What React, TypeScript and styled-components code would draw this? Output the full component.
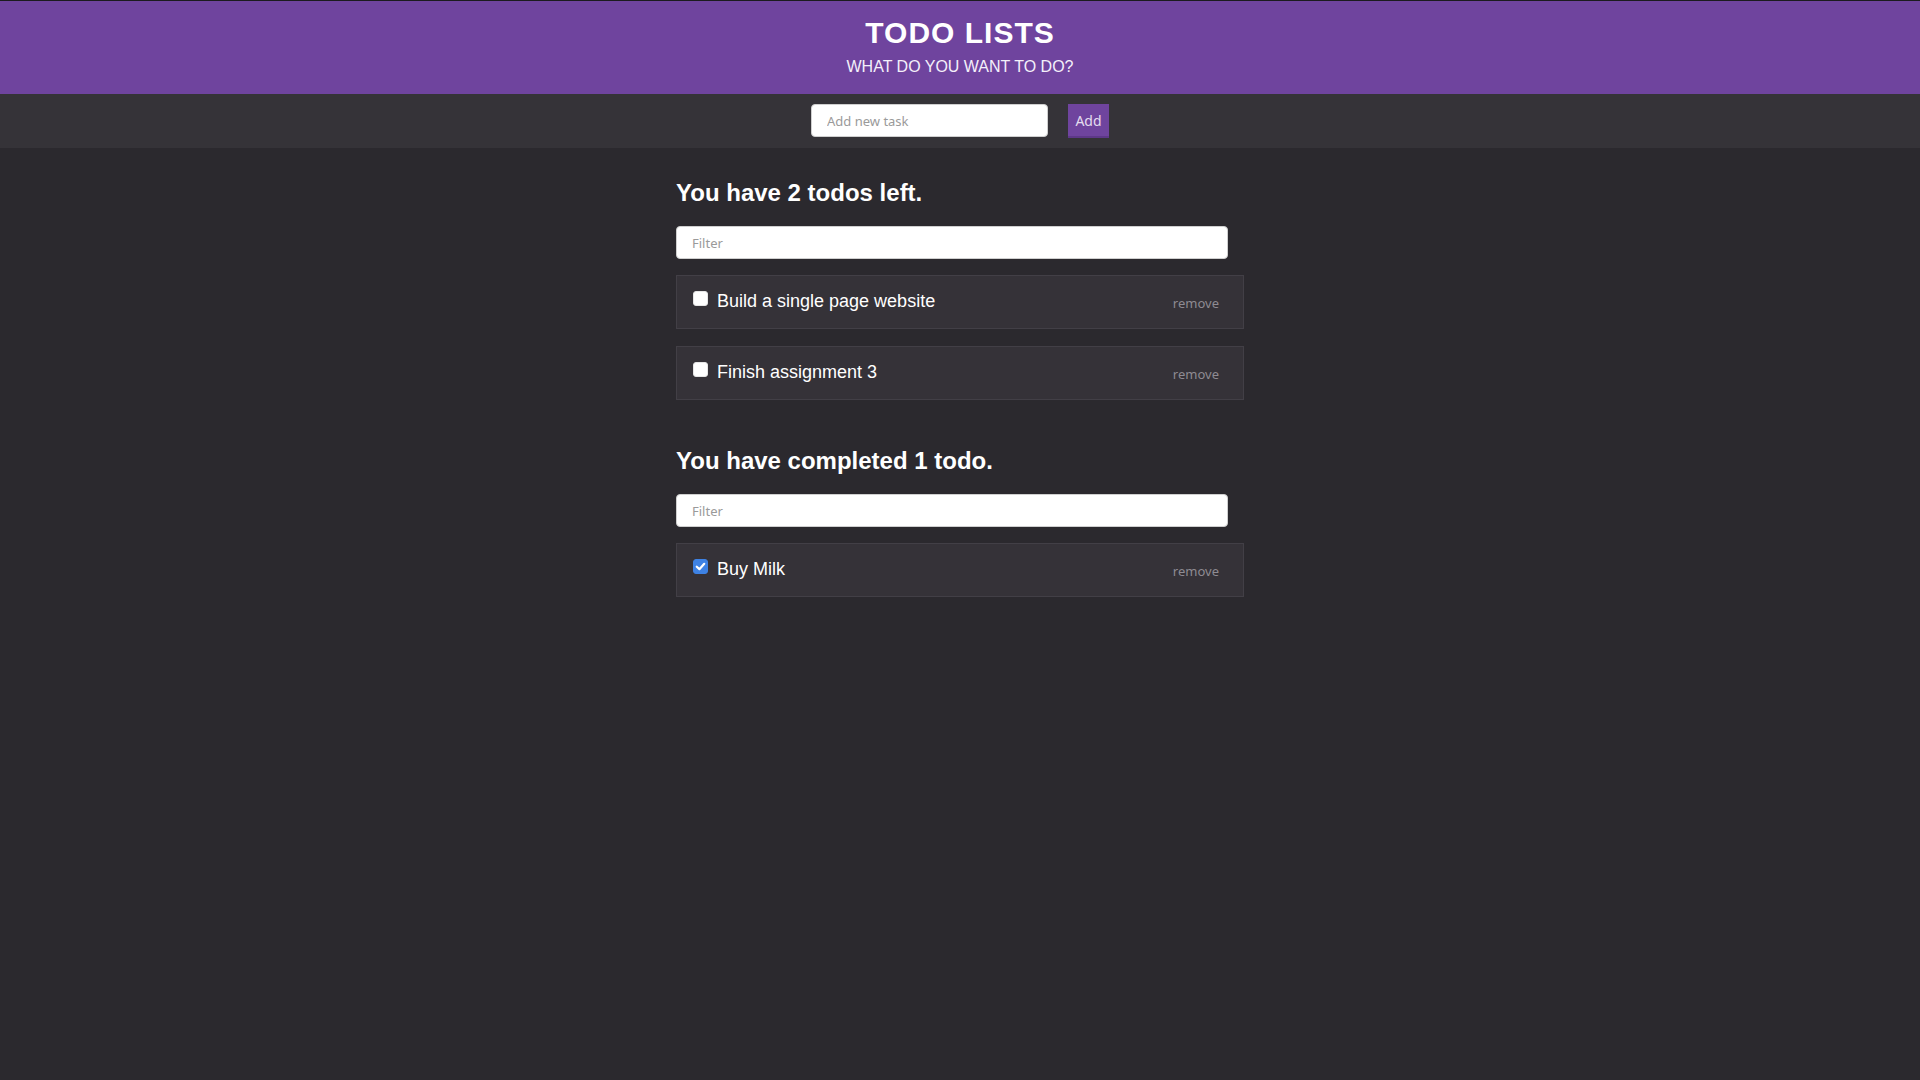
import React from "react";
import styled, { createGlobalStyle } from "styled-components";

const GlobalStyle = createGlobalStyle`
  html, body {
    margin: 0;
    padding: 0;
    background: #2b292e;
    min-height: 100%;
  }
  body {
    font-family: "Liberation Sans", Arial, sans-serif;
    color: #ffffff;
  }
  * { box-sizing: border-box; }
`;

const Page = styled.div`
  min-height: 1080px;
  background: #2b292e;
`;

const Header = styled.header`
  background: #6f449e;
  border-top: 1px solid #1c1b1f;
  height: 94px;
  padding-top: 15px;
  text-align: center;
`;

const Title = styled.h1`
  margin: 0;
  font-family: "Liberation Sans", Arial, sans-serif;
  font-size: 30px;
  line-height: 34px;
  font-weight: 700;
  letter-spacing: 1px;
  color: #ffffff;
`;

const Subtitle = styled.p`
  margin: 7px 0 0;
  font-family: "Liberation Sans", Arial, sans-serif;
  font-size: 16px;
  line-height: 20px;
  color: #f4f0fa;
`;

const Toolbar = styled.form`
  height: 54px;
  background: #353338;
  display: flex;
  justify-content: center;
  align-items: flex-start;
  padding-top: 10px;
  gap: 20px;
`;

const TextInput = styled.input<{ $width: number }>`
  width: ${(p) => p.$width}px;
  height: 33px;
  border: 1px solid #cfcfcf;
  border-radius: 4px;
  background: #ffffff;
  padding: 0 15px;
  font-family: "Noto Sans", "Open Sans", sans-serif;
  font-size: 13px;
  color: #333;
  outline: none;
  &::placeholder {
    color: #9a9a9a;
  }
`;

const AddButton = styled.button`
  width: 41px;
  height: 34px;
  border: none;
  border-bottom: 2px solid #5e3889;
  background: #6f449e;
  color: #e4dcef;
  font-family: "Noto Sans", "Open Sans", sans-serif;
  font-size: 14px;
  padding: 0;
  cursor: pointer;
`;

const Main = styled.main`
  width: 568px;
  margin: 0 auto;
  padding-top: 31px;
  display: flex;
  flex-direction: column;
  gap: 47px;
`;

const Section = styled.section`
  display: flex;
  flex-direction: column;
`;

const Heading = styled.h2`
  margin: 0 0 19px;
  font-family: "Liberation Sans", Arial, sans-serif;
  font-size: 24px;
  line-height: 28px;
  font-weight: 700;
  color: #ffffff;
`;

const List = styled.ul`
  list-style: none;
  margin: 16px 0 0;
  padding: 0;
  display: flex;
  flex-direction: column;
  gap: 17px;
`;

const Item = styled.li`
  height: 54px;
  background: #353238;
  border: 1px solid #423f46;
  padding: 15px 24px 0 16px;
  display: flex;
  align-items: flex-start;
`;

const CheckBox = styled.span<{ $checked: boolean }>`
  width: 15px;
  height: 15px;
  margin-top: 0px;
  border-radius: 3px;
  flex: none;
  display: flex;
  align-items: center;
  justify-content: center;
  background: ${(p) => (p.$checked ? "#3e82e4" : "#ffffff")};
  border: 1px solid ${(p) => (p.$checked ? "#3e82e4" : "#e6e6e6")};
`;

const Label = styled.span`
  margin-left: 9px;
  flex: 1;
  font-family: "Liberation Sans", Arial, sans-serif;
  font-size: 18px;
  line-height: 21px;
  color: #ffffff;
`;

const Remove = styled.button`
  align-self: center;
  margin-top: -14px;
  background: none;
  border: none;
  padding: 0;
  font-family: "Noto Sans", "Open Sans", sans-serif;
  font-size: 13px;
  color: #8e8b92;
  cursor: pointer;
`;

type Todo = { id: number; text: string; done: boolean };

const todos: Todo[] = [
  { id: 1, text: "Build a single page website", done: false },
  { id: 2, text: "Finish assignment 3", done: false },
  { id: 3, text: "Buy Milk", done: true },
];

function TodoRow({ todo }: { todo: Todo }) {
  return (
    <Item>
      <CheckBox $checked={todo.done} role="checkbox" aria-checked={todo.done}>
        {todo.done && (
          <svg width="11" height="11" viewBox="0 0 10 10">
            <path
              d="M1.6 5.2 L4 7.4 L8.4 2.6"
              fill="none"
              stroke="#ffffff"
              strokeWidth="2"
              strokeLinecap="round"
              strokeLinejoin="round"
            />
          </svg>
        )}
      </CheckBox>
      <Label>{todo.text}</Label>
      <Remove type="button">remove</Remove>
    </Item>
  );
}

export default function App() {
  const left = todos.filter((t) => !t.done);
  const done = todos.filter((t) => t.done);
  return (
    <Page>
      <GlobalStyle />
      <Header>
        <Title>TODO LISTS</Title>
        <Subtitle>WHAT DO YOU WANT TO DO?</Subtitle>
      </Header>
      <Toolbar onSubmit={(e) => e.preventDefault()}>
        <TextInput $width={237} placeholder="Add new task" />
        <AddButton type="submit">Add</AddButton>
      </Toolbar>
      <Main>
        <Section>
          <Heading>You have {left.length} todos left.</Heading>
          <TextInput $width={552} placeholder="Filter" />
          <List>
            {left.map((t) => (
              <TodoRow key={t.id} todo={t} />
            ))}
          </List>
        </Section>
        <Section>
          <Heading>You have completed {done.length} todo.</Heading>
          <TextInput $width={552} placeholder="Filter" />
          <List>
            {done.map((t) => (
              <TodoRow key={t.id} todo={t} />
            ))}
          </List>
        </Section>
      </Main>
    </Page>
  );
}
